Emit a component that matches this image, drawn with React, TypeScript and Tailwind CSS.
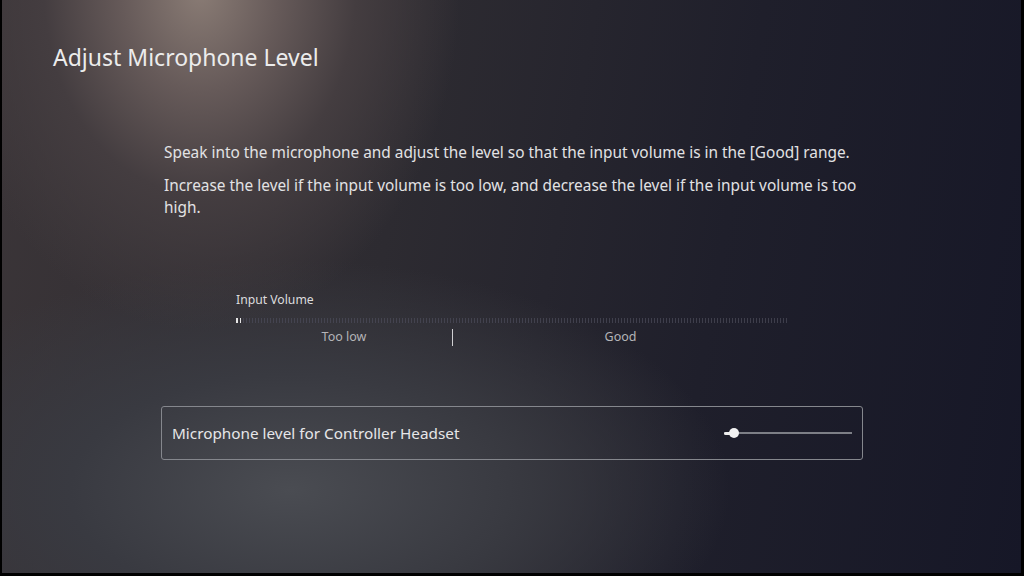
import React from "react";

const TICKS = Array.from({ length: 184 }, (_, i) => i);

function Meter() {
  return (
    <div className="flex h-[5px] w-[552px] items-stretch gap-[2px]">
      {TICKS.map((i) => (
        <div
          key={i}
          className={i < 2 ? "w-[1.5px] bg-[#e6e6e6]" : "w-px bg-[#4c4c5a]/70"}
        />
      ))}
    </div>
  );
}

function Slider() {
  return (
    <div className="relative flex h-[12px] w-[128px] items-center">
      <div className="h-[2px] w-full bg-[#7d7f86]" />
      <div className="absolute left-0 h-[3px] w-[9px] rounded-full bg-[#eeeeee]" />
      <div className="absolute left-[5px] h-[10px] w-[10px] rounded-full bg-[#f2f2f2]" />
    </div>
  );
}

export default function App() {
  return (
    <div className="relative h-[576px] w-[1024px] overflow-hidden bg-[#1b1b26] text-[#e4e4e6] font-['Noto_Sans','Open_Sans',sans-serif]">
      {/* background lighting */}
      <div className="absolute inset-0 bg-[radial-gradient(ellipse_260px_340px_at_200px_-10px,#8a7c75_0%,#665a59_30%,#443d40_60%,transparent_100%),radial-gradient(ellipse_440px_230px_at_290px_490px,#4a4c52_0%,#393a41_50%,transparent_100%),linear-gradient(100deg,#3b3538_0%,#2d2b31_38%,#1f1f2b_68%,#161727_100%)]" />
      <div className="absolute inset-y-0 right-0 w-[3px] bg-black" />
      <div className="absolute inset-x-0 bottom-0 h-[3px] bg-black" />
      <div className="absolute inset-y-0 left-0 w-[2px] bg-black" />

      <div className="relative flex flex-col">
        <h1 className="pl-[53px] pt-[40px] text-[23px] leading-[34px] font-normal text-[#ececec]">
          Adjust Microphone Level
        </h1>

        <div className="mt-[68px] flex flex-col gap-[11px] pl-[164px] pr-[160px] text-[15.4px] leading-[22px] text-[#e2e2e4]">
          <p>
            Speak into the microphone and adjust the level so that the input
            volume is in the [Good] range.
          </p>
          <p>
            Increase the level if the input volume is too low, and decrease the
            level if the input volume is too high.
          </p>
        </div>

        <div className="mt-[72px] flex flex-col pl-[236px]">
          <div className="text-[12.2px] leading-[18px] text-[#dcdcde]">Input Volume</div>
          <div className="mt-[9px]">
            <Meter />
          </div>
          <div className="mt-[5px] flex h-[18px] w-[552px] items-center text-[12.5px] text-[#b4b4b8]">
            <div className="w-[216px] text-center">Too low</div>
            <div className="h-[17px] w-px bg-[#cfcfd2]" />
            <div className="flex-1 text-center">Good</div>
          </div>
        </div>

        <div className="ml-[161px] mt-[60px] flex h-[54px] w-[702px] items-center justify-between rounded-[3px] border-[1.5px] border-[#85878d] pl-[10px] pr-[10px]">
          <span className="text-[15.3px] text-[#e6e6e8]">
            Microphone level for Controller Headset
          </span>
          <Slider />
        </div>
      </div>
    </div>
  );
}
